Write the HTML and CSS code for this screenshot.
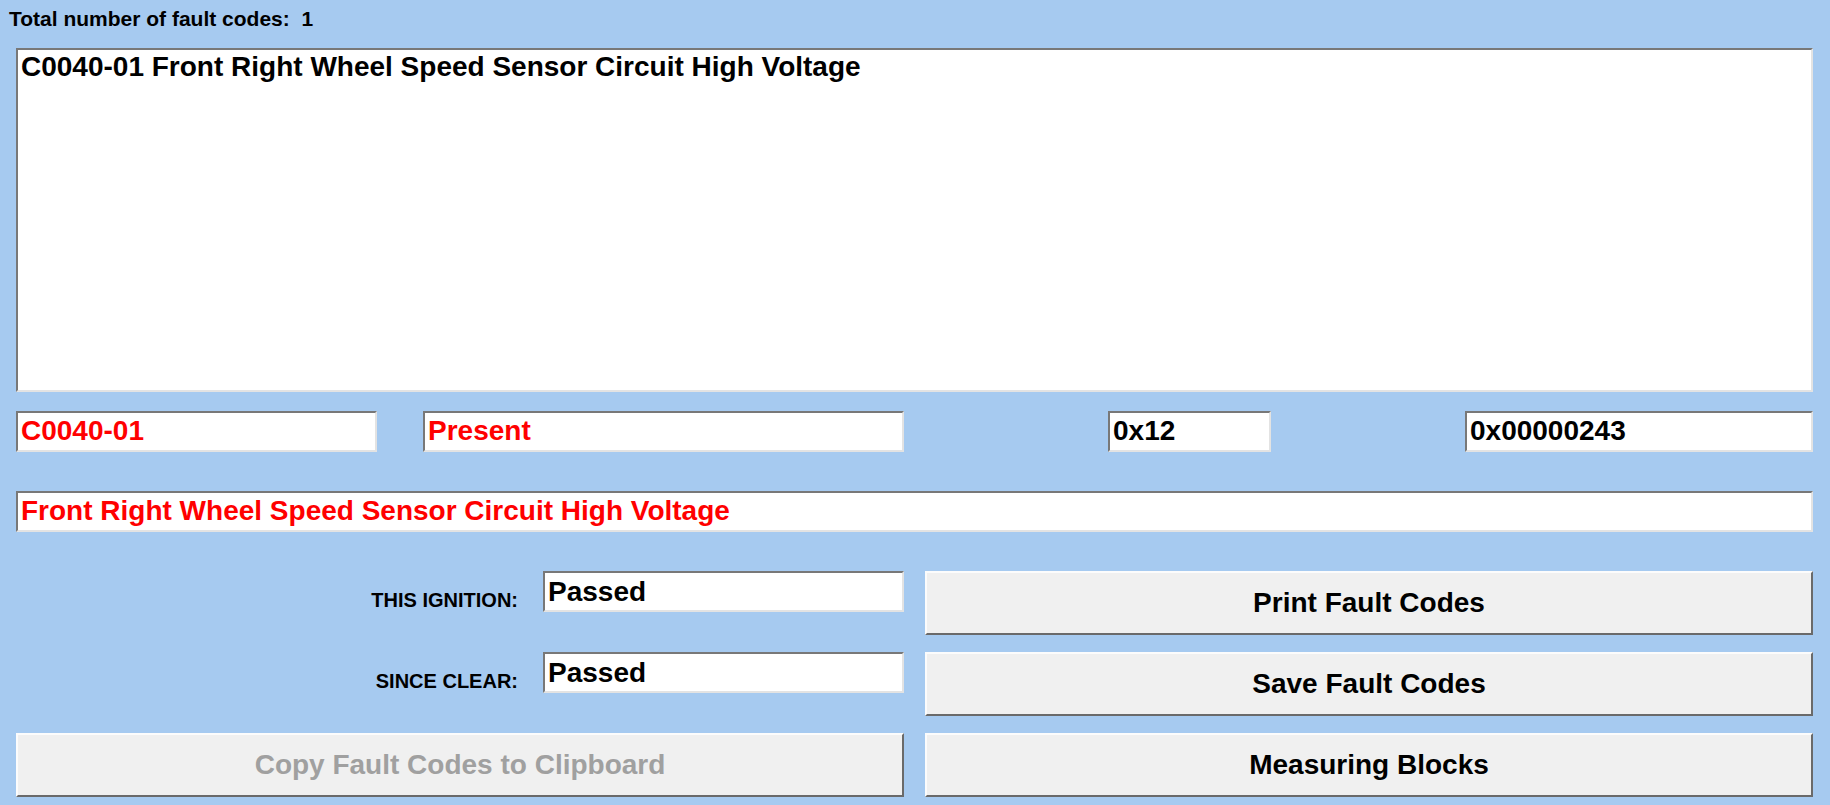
FILE: index.html
```html
<!DOCTYPE html>
<html>
<head>
<meta charset="utf-8">
<link rel="stylesheet" href="styles.css">
</head>
<body>
<div class="page">
  <div class="total">Total number of fault codes:&nbsp; 1</div>
  <div class="list sunken">
    <div class="list-item">C0040-01 Front Right Wheel Speed Sensor Circuit High Voltage</div>
  </div>
  <div class="info-row">
    <div class="field sunken red w-code">C0040-01</div>
    <div class="field sunken red w-status">Present</div>
    <div class="field sunken w-hex">0x12</div>
    <div class="field sunken w-addr">0x00000243</div>
  </div>
  <div class="field sunken red desc">Front Right Wheel Speed Sensor Circuit High Voltage</div>
  <div class="actions">
    <div class="status-row">
      <span class="label">THIS IGNITION:</span>
      <div class="field sunken status-field">Passed</div>
    </div>
    <button class="btn">Print Fault Codes</button>
    <div class="status-row">
      <span class="label">SINCE CLEAR:</span>
      <div class="field sunken status-field">Passed</div>
    </div>
    <button class="btn">Save Fault Codes</button>
    <button class="btn disabled">Copy Fault Codes to Clipboard</button>
    <button class="btn">Measuring Blocks</button>
  </div>
</div>
</body>
</html>
```

FILE: styles.css
```css
html, body {
  margin: 0;
  padding: 0;
  background: #a6caf0;
}
body {
  font-family: "Liberation Sans", Arial, sans-serif;
  font-weight: bold;
  color: #000;
}
.page {
  width: 1830px;
  height: 805px;
  box-sizing: border-box;
  padding: 0 17px 0 16px;
  display: flex;
  flex-direction: column;
}
.total {
  font-size: 21px;
  height: 48px;
  box-sizing: border-box;
  padding-top: 8px;
  margin-left: -7px;
  line-height: 22px;
}
.sunken {
  box-sizing: border-box;
  background: #fff;
  border-style: solid;
  border-width: 2px;
  border-color: #787878 #e3e3e3 #e3e3e3 #787878;
}
.list {
  height: 344px;
  padding: 1px 3px;
}
.list-item {
  font-size: 28px;
  line-height: 32px;
}
.info-row {
  display: flex;
  margin-top: 19px;
  height: 41px;
}
.field {
  height: 41px;
  font-size: 28px;
  line-height: 32px;
  padding: 2px 3px;
  white-space: nowrap;
  overflow: hidden;
}
.red { color: #ff0000; }
.w-code { width: 361px; }
.w-status { width: 481px; margin-left: 46px; }
.w-hex { width: 163px; margin-left: 204px; }
.w-addr { width: 348px; margin-left: 194px; }
.desc {
  margin-top: 39px;
  width: 100%;
}
.actions {
  margin-top: 39px;
  display: grid;
  grid-template-columns: 888px 1fr;
  grid-auto-rows: 64px;
  column-gap: 21px;
  row-gap: 17px;
}
.status-row {
  display: flex;
  justify-content: flex-end;
  align-items: flex-start;
}
.label {
  font-size: 20px;
  margin-top: 14px;
  margin-right: 25px;
  line-height: 30px;
}
.status-field {
  width: 361px;
  padding-top: 3px;
}
.btn {
  font-family: inherit;
  font-weight: bold;
  font-size: 28px;
  color: #000;
  background: #f0f0f0;
  border-style: solid;
  border-width: 2px;
  border-color: #fcfcfc #6a6a6a #6a6a6a #fcfcfc;
  margin: 0;
  padding: 0;
  height: 64px;
  box-sizing: border-box;
  text-align: center;
}
.btn.disabled {
  color: #a0a0a0;
}
```
